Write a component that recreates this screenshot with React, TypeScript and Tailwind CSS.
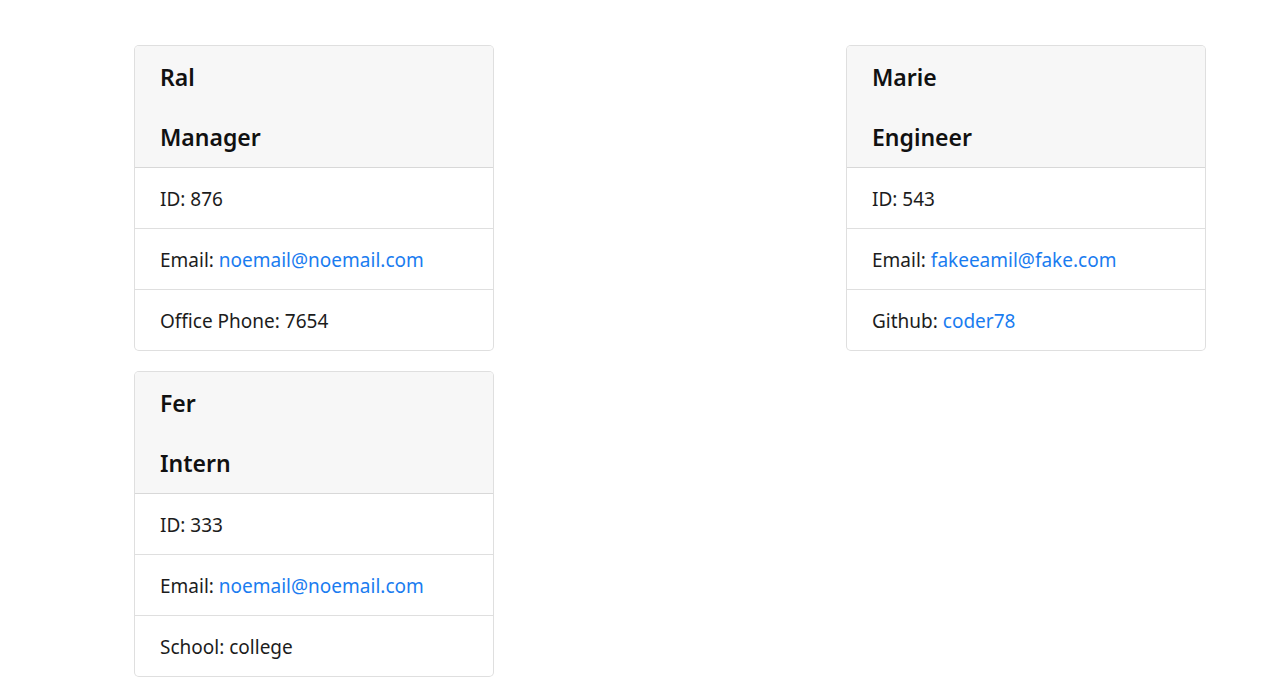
import React from 'react';

type Row = { label: string; value: string; link?: boolean };

interface Employee {
  name: string;
  role: string;
  rows: Row[];
}

const employees: Employee[] = [
  {
    name: 'Ral',
    role: 'Manager',
    rows: [
      { label: 'ID', value: '876' },
      { label: 'Email', value: 'noemail@noemail.com', link: true },
      { label: 'Office Phone', value: '7654' },
    ],
  },
  {
    name: 'Marie',
    role: 'Engineer',
    rows: [
      { label: 'ID', value: '543' },
      { label: 'Email', value: 'fakeeamil@fake.com', link: true },
      { label: 'Github', value: 'coder78', link: true },
    ],
  },
  {
    name: 'Fer',
    role: 'Intern',
    rows: [
      { label: 'ID', value: '333' },
      { label: 'Email', value: 'noemail@noemail.com', link: true },
      { label: 'School', value: 'college' },
    ],
  },
];

const EmployeeCard: React.FC<{ employee: Employee }> = ({ employee }) => {
  return (
    <div className="w-[360px] border border-black/[0.125] rounded-[5px] bg-white overflow-hidden">
      <div className="bg-[#f7f7f7] border-b border-black/[0.125] px-[25px] pt-[16px] pb-[15px] flex flex-col gap-[30px]">
        <h3 className="text-[23px] leading-[30px] font-semibold text-[#111]">{employee.name}</h3>
        <h3 className="text-[23px] leading-[30px] font-semibold text-[#111]">{employee.role}</h3>
      </div>
      <ul>
        {employee.rows.map((row, i) => (
          <li
            key={row.label}
            className={`px-[25px] pt-[16px] pb-[14px] leading-[30px] ${i > 0 ? 'border-t border-black/[0.125]' : ''}`}
          >
            {row.label}:{' '}
            {row.link ? <a className="text-[#1a7cf0]">{row.value}</a> : row.value}
          </li>
        ))}
      </ul>
    </div>
  );
};

export default function App() {
  return (
    <div
      className="min-h-screen bg-white text-[19px] text-[#1c1c1c]"
      style={{ fontFamily: '"Noto Sans", "Open Sans", sans-serif' }}
    >
      <div className="pt-[45px] pl-[134px] pr-[82px] flex flex-wrap justify-between gap-y-[20px]">
        {employees.map((e) => (
          <EmployeeCard key={e.name} employee={e} />
        ))}
      </div>
    </div>
  );
}
